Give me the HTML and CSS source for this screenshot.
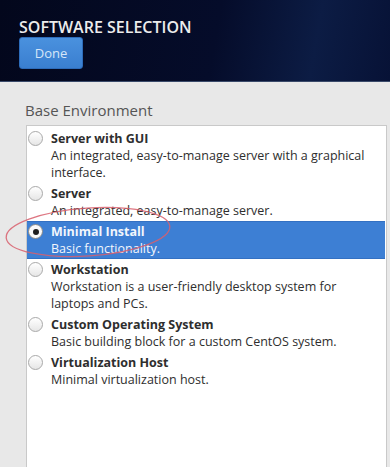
FILE: index.html
```html
<!DOCTYPE html>
<html lang="en">
<head>
    <meta charset="UTF-8">
    <meta name="viewport" content="width=device-width, initial-scale=1.0">
    <title>Software Selection</title>
    <link rel="stylesheet" href="styles.css">
</head>
<body>
    <header class="topbar">
        <h1>SOFTWARE SELECTION</h1>
        <button class="done">Done</button>
    </header>

    <main class="content">
        <h2>Base Environment</h2>

        <ul class="env-list">
            <li class="env">
                <span class="radio"></span>
                <div class="env-text">
                    <strong>Server with GUI</strong>
                    <p>An integrated, easy-to-manage server with a graphical interface.</p>
                </div>
            </li>
            <li class="env">
                <span class="radio"></span>
                <div class="env-text">
                    <strong>Server</strong>
                    <p>An integrated, easy-to-manage server.</p>
                </div>
            </li>
            <li class="env selected">
                <span class="radio checked"></span>
                <div class="env-text">
                    <strong>Minimal Install</strong>
                    <p>Basic functionality.</p>
                </div>
            </li>
            <li class="env">
                <span class="radio"></span>
                <div class="env-text">
                    <strong>Workstation</strong>
                    <p>Workstation is a user-friendly desktop system for laptops and PCs.</p>
                </div>
            </li>
            <li class="env">
                <span class="radio"></span>
                <div class="env-text">
                    <strong>Custom Operating System</strong>
                    <p>Basic building block for a custom CentOS system.</p>
                </div>
            </li>
            <li class="env">
                <span class="radio"></span>
                <div class="env-text">
                    <strong>Virtualization Host</strong>
                    <p>Minimal virtualization host.</p>
                </div>
            </li>
        </ul>

        <!-- hand-drawn marker round the chosen option -->
        <svg class="marker" width="190" height="70" viewBox="0 0 190 70">
            <ellipse cx="92" cy="36" rx="82" ry="24" transform="rotate(-4 92 36)" />
        </svg>
    </main>
</body>
</html>
```

FILE: styles.css
```css
body {
    margin: 0;
    height: 467px;
    overflow: hidden;
    font-family: "Open Sans", "DejaVu Sans", sans-serif;
    background-color: #e8e8e8;
}
.topbar {
    height: 82px;
    box-sizing: border-box;
    padding: 18px 19px 0;
    background: linear-gradient(100deg, #03071c 0%, #050c2a 55%, #0c1c44 80%, #071236 100%);
    border-bottom: 1px solid #3a4a6a;
}
.topbar h1 {
    margin: 0 0 1px;
    font-size: 16px;
    line-height: 18px;
    font-weight: 600;
    color: #ececec;
}
.done {
    width: 64px;
    height: 32px;
    border: 1px solid #2d6cba;
    border-radius: 3px;
    background: linear-gradient(#4a91de, #3a7fd0);
    color: #d6e6f8;
    font-family: inherit;
    font-size: 13px;
    padding: 0;
}
.content {
    position: relative;
    padding: 18px 3px 0 26px;
}
.content h2 {
    margin: 0 0 5px -1px;
    font-size: 15px;
    line-height: 20px;
    font-weight: normal;
    color: #555;
}
.env-list {
    list-style: none;
    margin: 0;
    padding: 2px 0 0;
    height: 360px;
    background: white;
    border: 1px solid #c9c9c9;
}
.env {
    display: flex;
    gap: 8px;
    padding: 2px 0 2px 1px;
    color: #2e2e2e;
}
.env.selected {
    background-color: #3d7fd4;
    box-shadow: inset 0 1px #3370c2, inset 0 -1px #3370c2;
    color: #f2f6fc;
    margin-right: 1px;
}
.env-text strong {
    display: block;
    font-size: 12.5px;
    line-height: 17px;
    font-weight: bold;
}
.env-text p {
    margin: 0;
    font-size: 12.5px;
    line-height: 17px;
    padding-right: 10px;
}
.radio {
    flex: none;
    width: 13px;
    height: 13px;
    margin-top: 1px;
    border: 1px solid #a9a9a9;
    border-radius: 50%;
    background: linear-gradient(#ffffff, #e6e6e6);
    position: relative;
}
.radio.checked {
    border-color: #8a8a8a;
    background: #fafafa;
}
.radio.checked::after {
    content: "";
    position: absolute;
    left: 3.5px;
    top: 3.5px;
    width: 6px;
    height: 6px;
    border-radius: 50%;
    background: #1e1e1e;
}
.marker {
    position: absolute;
    left: -4px;
    top: 114px;
    fill: none;
    stroke: #d9606e;
    stroke-width: 1.3;
    opacity: 0.85;
}
```
